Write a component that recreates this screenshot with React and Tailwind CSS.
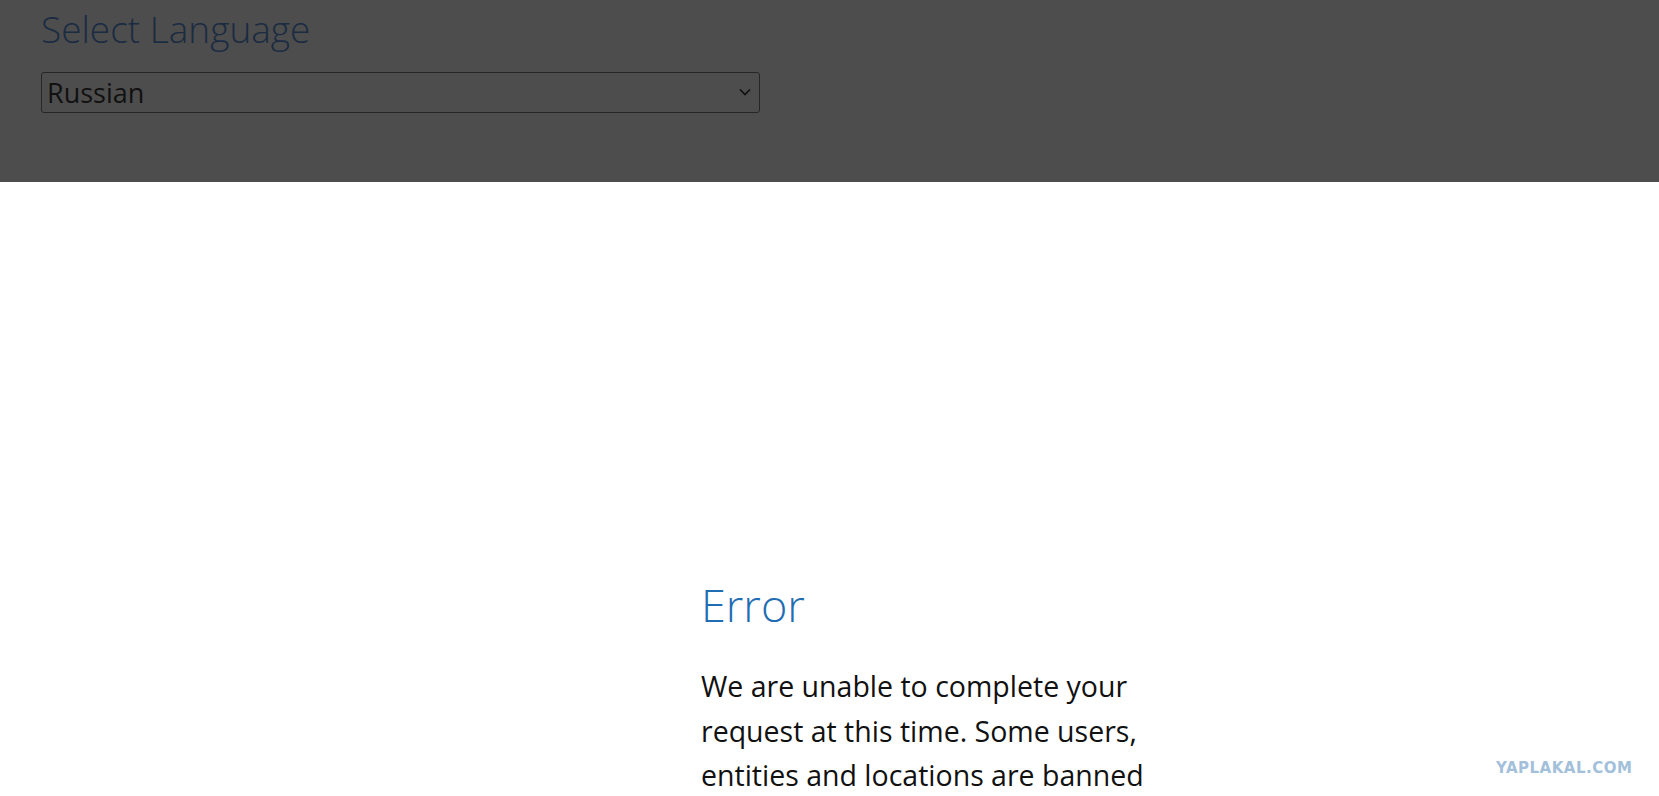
export default function App() {
  return (
    <div
      className="relative h-[796px] overflow-hidden bg-white"
      style={{ fontFamily: '"Open Sans", "Noto Sans", sans-serif' }}
    >
      <header className="h-[182px] bg-[#4d4d4d] px-[41px] pt-[3px]">
        <h1 className="text-[37px] font-light leading-[52px] text-[#1a2b42]">
          Select Language
        </h1>
        <div className="relative mt-[17px] w-[719px]">
          <select
            defaultValue="Russian"
            className="h-[41px] w-full appearance-none rounded-[3px] border border-[#262626] bg-transparent pl-[5px] text-[27px] leading-[38px] text-[#111111] outline-none"
            style={{ fontFamily: '"Open Sans", "Noto Sans", sans-serif' }}
          >
            <option>Russian</option>
          </select>
          <svg
            className="pointer-events-none absolute right-[9px] top-[16px]"
            width="12"
            height="8"
            viewBox="0 0 12 8"
          >
            <path d="M1 1.5 L6 6.5 L11 1.5" fill="none" stroke="#111" strokeWidth="1.7" />
          </svg>
        </div>
      </header>

      <main className="pl-[701px] pt-[393px]">
        <h2 className="text-[45px] font-light leading-[60px] text-[#1f6db3]">Error</h2>
        <p className="mt-[29px] w-[470px] text-[28.5px] leading-[44.5px] text-[#111111]">
          We are unable to complete your request at this time. Some users,
          entities and locations are banned from using this service.
        </p>
      </main>

      <div
        className="absolute left-[1496px] top-[757px] text-[15px] font-black tracking-[0.5px] text-[#a3c0db]"
        style={{ fontFamily: '"DejaVu Sans", sans-serif' }}
      >
        YAPLAKAL.COM
      </div>
    </div>
  );
}
